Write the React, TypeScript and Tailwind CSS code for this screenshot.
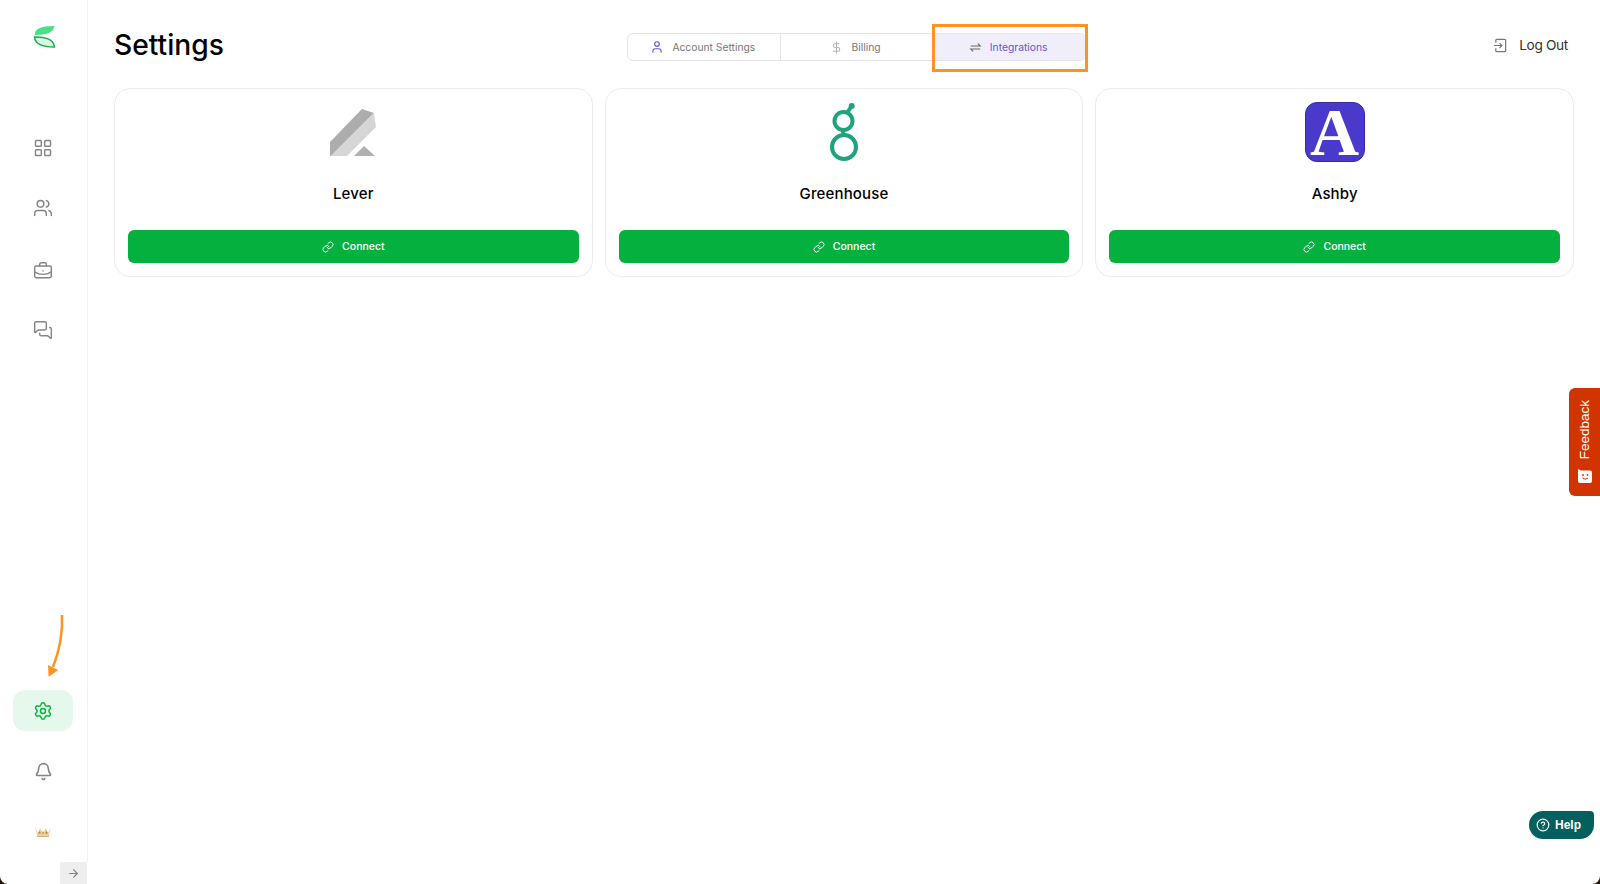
import {
  ArrowRight,
  Bell,
  BriefcaseBusiness,
  CircleHelp,
  DollarSign,
  LayoutGrid,
  Link,
  MessagesSquare,
  Settings,
  User,
  Users,
} from "lucide-react";
import type { ReactNode } from "react";

function LeverLogo() {
  return (
    <svg viewBox="13 7 60 60" className="w-[60px] h-[60px]">
      <polygon points="20,47 52,14 64,18 21,61 20,61" fill="#adadad" />
      <polygon points="64,18 66,32 37,61 21,61" fill="#d6d6d6" />
      <polygon points="44,61 54,51 65,61" fill="#b0b0b0" />
    </svg>
  );
}

function GreenhouseLogo() {
  return (
    <svg viewBox="0 0 60 60" className="w-[60px] h-[60px]" fill="none" stroke="#1fa37f" strokeWidth="4">
      <circle cx="29.5" cy="19" r="9" />
      <circle cx="30" cy="45" r="12" />
      <path d="M33 11 L37 5" />
      <path d="M29 28 L29.5 33" />
      <circle cx="37.7" cy="4" r="3" fill="#1fa37f" stroke="none" />
    </svg>
  );
}

function AshbyLogo() {
  return (
    <div className="w-[60px] h-[60px] rounded-xl bg-[#4a3acb] border border-[#352a9c] flex items-center justify-center">
      <span className="text-white text-[68px] leading-none font-bold font-['Liberation_Serif',serif]">A</span>
    </div>
  );
}

function NavItem({ children, active }: { children: ReactNode; active?: boolean }) {
  return (
    <div className="h-[60.5px] flex items-center justify-center pr-px">
      <div
        className={
          active
            ? "w-[60px] h-[41px] rounded-xl bg-[#e6f7ec] flex items-center justify-center text-[#09b13e]"
            : "w-[60px] h-[41px] flex items-center justify-center text-[#858585]"
        }
      >
        {children}
      </div>
    </div>
  );
}

function Tab({ icon, label, active }: { icon: ReactNode; label: string; active?: boolean }) {
  return (
    <div
      className={
        active
          ? "flex-1 flex items-center justify-center gap-2 pr-[2px] bg-[#efeefa] text-[#6a55d6] rounded-r-md"
          : "flex-1 flex items-center justify-center gap-2 pr-[2px] text-[#777] border-r border-[#e4e3ef]"
      }
    >
      {icon}
      <span className="pt-[2px]">{label}</span>
    </div>
  );
}

function IntegrationCard({ name, logo }: { name: string; logo: ReactNode }) {
  return (
    <div className="flex-1 h-[189px] border border-[#ececf0] rounded-2xl px-[13px] pt-[13px] flex flex-col items-center">
      {logo}
      <h2 className="mt-[22px] text-[15px] leading-5 font-medium text-black tracking-[0.01em]">{name}</h2>
      <button className="mt-[26px] w-full h-[33px] rounded-md bg-[#04b13f] text-white text-[10.5px] font-medium flex items-center justify-center gap-2">
        <Link size={12} />
        Connect
      </button>
    </div>
  );
}

export default function App() {
  return (
    <div className="bg-[#24150c] h-[884px] w-[1600px] overflow-hidden">
      <div className="relative bg-white h-full rounded-b-lg flex font-['Inter',sans-serif]">
        {/* sidebar */}
        <aside className="w-[88px] flex flex-col">
          <div className="flex-1 border-r border-[#f1f1f3] flex flex-col">
            <div className="h-[118px] pt-[25px] flex justify-center pl-[2px]">
              <svg viewBox="0 0 24 24" className="w-[24px] h-[24px]">
                <path d="M1.500 10 C2 4 7 1 21.500 1 C20.500 7 15 10 1.500 10 Z" fill="#48e083" />
                <path d="M1.500 12 C15 12 20.500 15 21.500 22 C8 22 2 19 1.500 12 Z" fill="#d8f8e4" stroke="#12b04c" strokeWidth="1.500" />
              </svg>
            </div>
            <NavItem><LayoutGrid size={20} strokeWidth={1.75} /></NavItem>
            <NavItem><Users size={20} strokeWidth={1.75} className="-mt-[2px]" /></NavItem>
            <NavItem><BriefcaseBusiness size={20} strokeWidth={1.75} className="mt-[3px]" /></NavItem>
            <NavItem><MessagesSquare size={20} strokeWidth={1.75} /></NavItem>
            <div className="flex-1" />
            <NavItem active><Settings size={20} strokeWidth={1.75} /></NavItem>
            <NavItem><Bell size={19} strokeWidth={2} /></NavItem>
            <NavItem>
              <svg viewBox="0 0 18 12" className="w-[18px] h-[12px]">
                <path d="M1 1 L4 7 L6 2 L9 7 L12 2 L14 7 L17 1 L15 9 L3 9 Z" fill="#e9d3a8" />
                <path d="M4 7.500 L5.500 5 L7 7.500 Z M8 7.500 L9 5 L10 7.500 Z M11 7.500 L12.500 5 L14 7.500 Z" fill="#b9812c" />
                <rect x="3" y="9.500" width="12" height="1.300" fill="#cfa560" />
              </svg>
            </NavItem>
          </div>
          <div className="h-[22px] flex justify-end pr-px">
            <div className="w-[27px] h-[22px] bg-[#eeeeee] flex items-center justify-center text-[#808080]">
              <ArrowRight size={13} />
            </div>
          </div>
        </aside>

        {/* main */}
        <main className="flex-1 pl-[26px] pr-[26px]">
          <header className="h-[88px] flex items-center">
            <h1 className="w-[513px] mt-[2px] text-[28.2px] font-medium text-black">Settings</h1>
            <div className="w-[459px] h-[28px] self-start mt-[33px] flex border border-[#e4e3ef] rounded-md text-[10.3px]">
              <Tab icon={<User size={14} className="text-[#6a55d6]" />} label="Account Settings" />
              <Tab icon={<DollarSign size={13} className="text-[#b5b5b5]" />} label="Billing" />
              <Tab
                active
                icon={
                  <svg viewBox="0 0 16 14" className="w-[13px] h-[11px]" fill="none" stroke="#666" strokeWidth="1.400">
                    <path d="M2 5 H14 L11 2" />
                    <path d="M14 9 H2 L5 12" />
                  </svg>
                }
                label="Integrations"
              />
            </div>
            <div className="flex-1 flex justify-end items-center gap-[11px] pr-[6px] mt-[3px] text-[13.7px] text-[#333]">
              <svg viewBox="0 0 16 16" className="w-[15px] h-[15px]" fill="none" stroke="#777" strokeWidth="1.300">
                <path d="M3 5 V2.500 Q3 1.500 4 1.500 H12.500 Q13.500 1.500 13.500 2.500 V13.500 Q13.500 14.500 12.500 14.500 H4 Q3 14.500 3 13.500 V11" />
                <path d="M1 8 H9.500 M7 5.500 L9.500 8 L7 10.500" />
              </svg>
              <span className="tracking-tight">Log Out</span>
            </div>
          </header>
          <div className="flex gap-[12px]">
            <IntegrationCard name="Lever" logo={<LeverLogo />} />
            <IntegrationCard name="Greenhouse" logo={<GreenhouseLogo />} />
            <IntegrationCard name="Ashby" logo={<AshbyLogo />} />
          </div>
        </main>

        {/* annotation overlays */}
        <div className="absolute left-[932px] top-[24px] w-[156px] h-[48px] border-[3px] border-[#ff9320]" />
        <svg className="absolute left-[40px] top-[610px]" width="30" height="72" viewBox="40 610 30 72" fill="none">
          <path d="M62 615 C63 635 59 652 53 667" stroke="#ff9320" strokeWidth="2.500" />
          <polygon points="48,665 58,670 48.700,677" fill="#ff9320" />
        </svg>

        {/* feedback tab */}
        <div className="absolute right-0 top-[388px] w-[31px] h-[108px] bg-[#d13400] rounded-l-md flex flex-col items-center justify-end pb-[13px] gap-[10px] text-white font-['Liberation_Sans',sans-serif]">
          <span className="[writing-mode:vertical-rl] rotate-180 text-[13.5px] leading-none">Feedback</span>
          <svg viewBox="0 0 14 14" className="w-[14px] h-[14px]">
            <path d="M0 0 L3 1.500 H12 Q14 1.500 14 3.500 V12 Q14 14 12 14 H2 Q0 14 0 12 Z" fill="#fff" />
            <circle cx="5" cy="6" r="0.900" fill="#d13400" />
            <circle cx="9.500" cy="6" r="0.900" fill="#d13400" />
            <path d="M4.500 9 Q7.200 11.500 10 9" stroke="#d13400" strokeWidth="1" fill="none" />
          </svg>
        </div>

        {/* help */}
        <div className="absolute left-[1529px] top-[811px] w-[65px] h-[28px] bg-[#03605e] rounded-l-[14px] rounded-tr-[4px] rounded-br-[14px] flex items-center gap-[5px] pl-[7px] text-white text-[12px] font-bold font-['Liberation_Sans',sans-serif]">
          <CircleHelp size={14} />
          Help
        </div>
      </div>
    </div>
  );
}
